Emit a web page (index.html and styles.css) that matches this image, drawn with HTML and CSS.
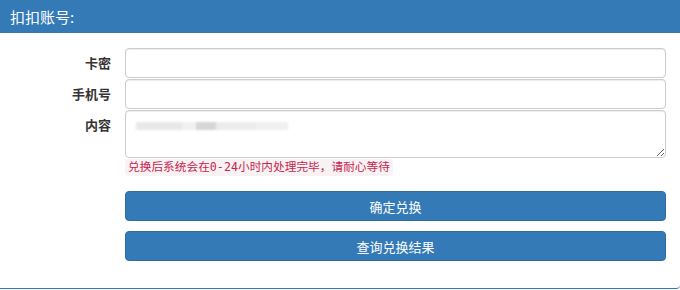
FILE: index.html
```html
<!DOCTYPE html>
<html lang="zh">
<head>
<meta charset="utf-8">
<link rel="stylesheet" href="styles.css">
</head>
<body>
<div class="panel">
  <div class="panel-heading">扣扣账号:</div>
  <div class="panel-body">
    <div class="row">
      <label class="label">卡密</label>
      <input class="control" type="text">
    </div>
    <div class="row">
      <label class="label">手机号</label>
      <input class="control" type="text">
    </div>
    <div class="row row-top">
      <label class="label label-top">内容</label>
      <div class="field">
        <div class="area-wrap">
          <textarea class="control area"></textarea>
          <span class="blur">
            <span class="b b1"></span><span class="b b2"></span><span class="b b3"></span><span class="b b4"></span><span class="b b5"></span>
          </span>
        </div>
        <code class="help">兑换后系统会在0-24小时内处理完毕，请耐心等待</code>
      </div>
    </div>
    <div class="row row-btn">
      <span></span>
      <button class="btn" type="button">确定兑换</button>
    </div>
    <div class="row row-btn2">
      <span></span>
      <button class="btn" type="button">查询兑换结果</button>
    </div>
  </div>
</div>
</body>
</html>
```

FILE: styles.css
```css
* { box-sizing: border-box; }
html, body { margin: 0; padding: 0; background: #fff; }
body {
  font-family: "Noto Sans CJK SC", "Liberation Sans", sans-serif;
  font-size: 13px;
  color: #333;
  width: 680px;
  height: 290px;
  overflow: hidden;
}
.panel {
  width: 680px;
  border-bottom: 1px solid #337ab7;
  border-bottom-right-radius: 4px;
}
.panel-heading {
  height: 33px;
  background: #337ab7;
  color: #fff;
  font-size: 15px;
  line-height: 33px;
  padding-left: 10px;
}
.panel-body {
  padding: 15px 0 27px 0;
}
.row {
  display: grid;
  grid-template-columns: 125px 541px;
  align-items: center;
  margin-bottom: 1px;
}
.row-top { align-items: start; }
.label {
  text-align: right;
  padding-right: 14px;
  font-weight: bold;
  font-size: 13px;
  line-height: 18px;
  padding-bottom: 1px;
}
.label-top { padding-top: 6px; }
.control {
  display: block;
  width: 541px;
  height: 30px;
  border: 1px solid #ccc;
  border-radius: 4px;
  box-shadow: inset 0 1px 1px rgba(0,0,0,0.075);
  margin: 0;
  padding: 6px 12px;
  font: inherit;
  background: #fff;
}
.area-wrap { position: relative; }
.area {
  height: 48px;
  resize: vertical;
}
.blur {
  position: absolute;
  left: 11px;
  top: 12px;
  display: flex;
  filter: blur(1.3px);
}
.b { display: block; height: 8px; }
.b1 { width: 46px; background: #e8e8e8; }
.b2 { width: 14px; background: #f1f1f1; }
.b3 { width: 20px; background: #d6d6d6; }
.b4 { width: 40px; background: #ececec; }
.b5 { width: 32px; background: #f0f0f0; }
.help {
  display: block;
  width: fit-content;
  margin-top: 1px;
  padding: 1px 3px;
  font-family: "DejaVu Sans Mono", "Noto Sans CJK SC", monospace;
  font-size: 11.7px;
  line-height: 15px;
  color: #c7254e;
  background: #f9f2f4;
  border-radius: 4px;
}
.row-btn { margin-top: 15px; margin-bottom: 0; }
.row-btn2 { margin-top: 10px; margin-bottom: 0; }
.btn {
  display: block;
  width: 541px;
  height: 30px;
  margin: 0;
  background: #337ab7;
  border: 1px solid #2e6da4;
  border-radius: 4px;
  color: #fff;
  font: inherit;
  font-size: 13px;
  text-align: center;
}
```
